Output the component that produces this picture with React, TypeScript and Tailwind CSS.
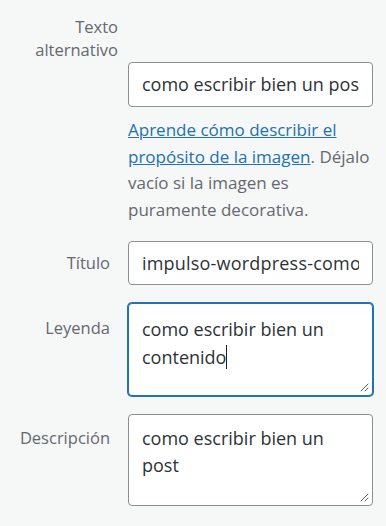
import React from "react";

const font = { fontFamily: '"Open Sans", "Noto Sans", sans-serif' };

function Grip() {
  return (
    <svg className="absolute right-[3px] bottom-[3px]" width="10" height="10" viewBox="0 0 10 10">
      <path d="M9 2 L2 9 M9 6 L6 9" stroke="#5c5f63" strokeWidth="1" strokeLinecap="round" />
    </svg>
  );
}

export default function App() {
  return (
    <div className="w-[386px] h-[526px] bg-[#f6f7f7] overflow-hidden" style={font}>
      <div className="flex pt-[15px]">
        <div className="w-[118px] text-right text-[16.5px] leading-[23px] text-[#646970]">
          Texto
          <br />
          alternativo
        </div>
        <div className="ml-[10px] w-[245px] pt-[47px]">
          <div className="h-[45px] rounded-[4px] border border-[#8c8f94] bg-white px-[13px] flex items-center">
            <div className="overflow-hidden whitespace-nowrap text-[18px] text-[#2c3338] w-full">
              como escribir bien un post
            </div>
          </div>
          <p className="mt-[10px] whitespace-nowrap text-[17px] leading-[26.5px] text-[#646970]">
            <a className="text-[#2271b1] underline">
              Aprende cómo describir el
              <br />
              propósito de la imagen
            </a>
            . Déjalo
            <br />
            vacío si la imagen es
            <br />
            puramente decorativa.
          </p>
        </div>
      </div>

      <div className="flex items-center mt-[18px]">
        <div className="w-[110px] text-right text-[16.5px] text-[#646970]">Título</div>
        <div className="ml-[18px] w-[245px] h-[44px] rounded-[4px] border border-[#8c8f94] bg-white px-[13px] flex items-center">
          <div className="overflow-hidden whitespace-nowrap text-[18px] tracking-[0.2px] text-[#2c3338] w-full">
            impulso-wordpress-como-escribir
          </div>
        </div>
      </div>

      <div className="flex mt-[18px]">
        <div className="w-[110px] pt-[13px] text-right text-[16.5px] leading-[23px] text-[#646970]">Leyenda</div>
        <div className="relative ml-[18px] w-[245px] h-[93px] rounded-[4px] border border-[#2271b1] shadow-[0_0_0_1px_#2271b1] bg-white px-[13px] pt-[11px] text-[18px] leading-[28px] text-[#2c3338]">
          como escribir bien un contenido
          <span className="inline-block w-px h-[24px] bg-[#1d2327] align-[-5px]" />
          <Grip />
        </div>
      </div>

      <div className="flex mt-[18px]">
        <div className="w-[110px] pt-[12px] text-right text-[16.5px] leading-[23px] text-[#646970]">Descripción</div>
        <div className="relative ml-[18px] w-[245px] h-[92px] rounded-[4px] border border-[#8c8f94] bg-white px-[13px] pt-[10px] text-[18px] leading-[27px] text-[#2c3338]">
          como escribir bien un post
          <Grip />
        </div>
      </div>
    </div>
  );
}
